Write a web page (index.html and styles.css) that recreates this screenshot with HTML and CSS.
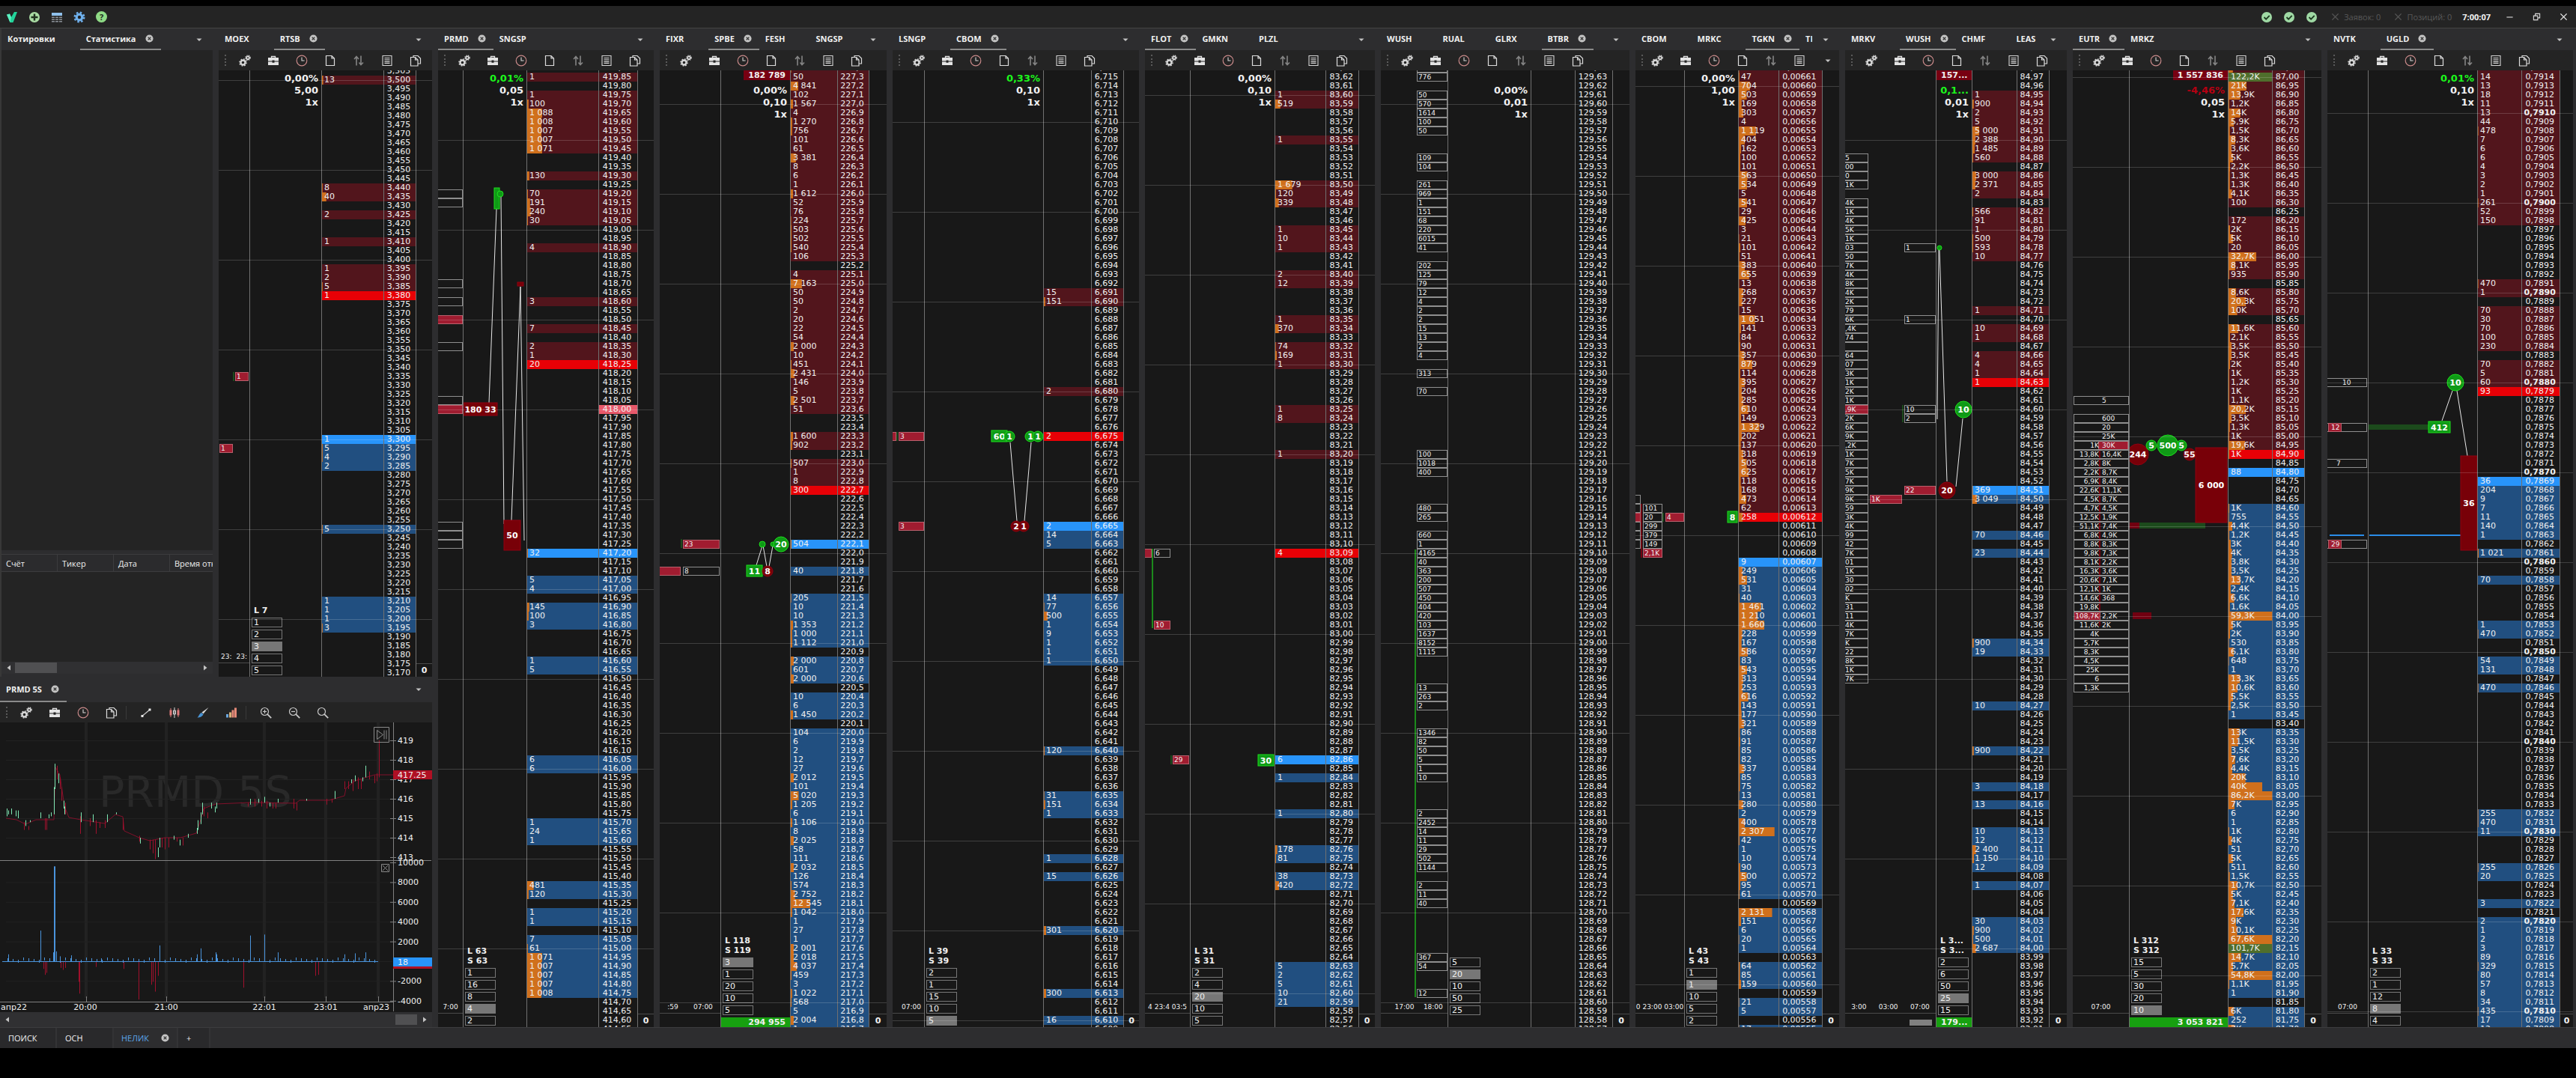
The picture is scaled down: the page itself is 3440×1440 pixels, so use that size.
FILE: index.html
```html
<!DOCTYPE html>
<html lang="ru">
<head>
  <meta charset="UTF-8">
  <title>Терминал</title>
  <meta name="viewport" content="width=device-width, initial-scale=1.0">
  <link rel="stylesheet" href="styles.css">
</head>
<body>

  <!-- Icon set -->
  <svg class="sprite" aria-hidden="true">
    <symbol id="i-gears" viewBox="0 0 16 16">
      <circle cx="5.5" cy="10.5" r="3" fill="none" stroke="#d8d8d8" stroke-width="2.4"/>
      <circle cx="5.5" cy="10.5" r="4.6" fill="none" stroke="#d8d8d8" stroke-width="1.4" stroke-dasharray="1.8 1.8"/>
      <circle cx="12" cy="4.2" r="1.9" fill="none" stroke="#d8d8d8" stroke-width="1.8"/>
      <circle cx="12" cy="4.2" r="3.2" fill="none" stroke="#d8d8d8" stroke-width="1.2" stroke-dasharray="1.4 1.2"/>
    </symbol>
    <symbol id="i-case" viewBox="0 0 16 16">
      <path d="M5.5 4V2.5h5V4" fill="none" stroke="#e4e4e4" stroke-width="1.3"/>
      <path d="M1 4h14v4.5H9.5v-1h-3v1H1zM1 9.5h5.5v1.3h3V9.5H15V14H1z" fill="#e4e4e4"/>
    </symbol>
    <symbol id="i-clock" viewBox="0 0 16 16">
      <circle cx="8" cy="8" r="6.8" fill="none" stroke="#c98a8a" stroke-width="1.2"/>
      <path d="M8 3.5V8h3.6" fill="none" stroke="#d8d8d8" stroke-width="1.1"/>
    </symbol>
    <symbol id="i-doc" viewBox="0 0 16 16">
      <path d="M2.5 1.5h7.5l3.5 3.5v9.5h-11zM10 1.5V5h3.5" fill="none" stroke="#dcdcdc" stroke-width="1.2"/>
    </symbol>
    <symbol id="i-updown" viewBox="0 0 16 16">
      <path d="M5 14.5V3M2 6l3-3.5L8 6M11 1.5V13M8.5 10.5l2.5 3 3-3" fill="none" stroke="#858585" stroke-width="1.6"/>
    </symbol>
    <symbol id="i-list" viewBox="0 0 16 16">
      <path d="M2 1.5h12v13H2zM4.5 4.5h7M4.5 6.8h7M4.5 9.1h7M4.5 11.4h7" fill="none" stroke="#d4d4d4" stroke-width="1.1"/>
    </symbol>
    <symbol id="i-copy" viewBox="0 0 16 16">
      <path d="M5 3.5v-2h6l3.5 3.5v7H11M1.5 3.5h6L11 7v8H1.5zM7.5 3.5V7H11" fill="none" stroke="#dcdcdc" stroke-width="1.2"/>
    </symbol>
    <symbol id="i-close" viewBox="0 0 12 12">
      <circle cx="6" cy="6" r="5.5" fill="#c4c4c4"/>
      <path d="M4 4l4 4M8 4L4 8" stroke="#2b2b2b" stroke-width="1.4"/>
    </symbol>
    <symbol id="i-down" viewBox="0 0 8 8"><path d="M0.5 2.5h7L4 6z" fill="#c4c4c4"/></symbol>
    <symbol id="i-left" viewBox="0 0 8 8"><path d="M6 0.5v7L1.5 4z" fill="#c4c4c4"/></symbol>
    <symbol id="i-right" viewBox="0 0 8 8"><path d="M2 0.5v7L6.5 4z" fill="#c4c4c4"/></symbol>
    <symbol id="i-line" viewBox="0 0 16 16">
      <path d="M3.5 12L13 4" stroke="#c8c8c8" stroke-width="1.2"/>
      <path d="M1.5 11h3v3h-3zM11.5 2.5h3v3h-3z" fill="#e8e8e8"/>
    </symbol>
    <symbol id="i-candles" viewBox="0 0 16 16">
      <path d="M3 2v12M13 2v12" stroke="#e07a7a"/>
      <path d="M1.5 4.5h3v7h-3zM11.5 4.5h3v7h-3z" fill="#e07a7a"/>
      <path d="M8 1v14M6.5 5h3v5h-3z" fill="#242424" stroke="#d8d8d8"/>
    </symbol>
    <symbol id="i-brush" viewBox="0 0 16 16">
      <path d="M15.5 1L6.5 7.5l2 2z" fill="#d8d8d8"/>
      <path d="M6 8l2.5 2.2C7.5 13 4 14.5 0.5 14.5 3 12.5 3 9 6 8z" fill="#4a94d4"/>
    </symbol>
    <symbol id="i-bars" viewBox="0 0 16 16">
      <path d="M1 10h3v4.5H1z" fill="#6aa6dc"/>
      <path d="M5 7.5h3v7H5z" fill="#d8b27a"/>
      <path d="M8.5 4.5h3v10h-3zM12 1.5h3v13h-3z" fill="#e58a78"/>
    </symbol>
    <symbol id="i-zoom" viewBox="0 0 16 16">
      <circle cx="6.5" cy="6.5" r="5" fill="none" stroke="#c8c8c8" stroke-width="1.2"/>
      <path d="M10.2 10.2l5 5" stroke="#c8c8c8" stroke-width="1.8"/>
    </symbol>
    <symbol id="i-zoom-in" viewBox="0 0 16 16">
      <use href="#i-zoom"/><path d="M4 6.5h5M6.5 4v5" stroke="#c8c8c8" stroke-width="1.2"/>
    </symbol>
    <symbol id="i-zoom-out" viewBox="0 0 16 16">
      <use href="#i-zoom"/><path d="M4 6.5h5" stroke="#c8c8c8" stroke-width="1.2"/>
    </symbol>
    <symbol id="i-logo" viewBox="0 0 16 16">
      <path d="M1 4.5l4-1 2 4.5L11 1h4L9.5 15H5.5z" fill="#22d39a"/>
      <path d="M1 4.5l4-1 2 4.5-1.5 7z" fill="#5df0c0"/>
    </symbol>
    <symbol id="i-plus" viewBox="0 0 16 16">
      <circle cx="8" cy="8" r="7" fill="#a9dba4"/><path d="M8 3.5v9M3.5 8h9" stroke="#20301f" stroke-width="2.4"/>
    </symbol>
    <symbol id="i-grid" viewBox="0 0 16 16">
      <path d="M1 2h14v4H1z" fill="#8fc0ec"/>
      <path d="M1 7.5h4V9H1zM6 7.5h4V9H6zM11 7.5h4V9h-4zM1 10.2h4v1.5H1zM6 10.2h4v1.5H6zM11 10.2h4v1.5h-4zM1 13h4v1.5H1zM6 13h4v1.5H6zM11 13h4v1.5h-4z" fill="#8a9097"/>
    </symbol>
    <symbol id="i-gear" viewBox="0 0 16 16">
      <circle cx="8" cy="8" r="3.8" fill="none" stroke="#6fb0ec" stroke-width="3.2"/>
      <circle cx="8" cy="8" r="6.3" fill="none" stroke="#6fb0ec" stroke-width="2.4" stroke-dasharray="2.5 2.45"/>
    </symbol>
    <symbol id="i-ok" viewBox="0 0 16 16">
      <circle cx="8" cy="8" r="7" fill="#9fd9a4"/><path d="M4.5 8l2.6 2.6 4.6-4.8" fill="none" stroke="#1d3a20" stroke-width="1.8"/>
    </symbol>
    <symbol id="i-x" viewBox="0 0 12 12"><path d="M1.5 1.5l9 9M10.5 1.5l-9 9" stroke="currentColor" stroke-width="1.4"/></symbol>
    <symbol id="i-min" viewBox="0 0 12 12"><path d="M1.5 6.5h9" stroke="#ddd" stroke-width="1.2"/></symbol>
    <symbol id="i-restore" viewBox="0 0 12 12">
      <path d="M1.5 4.5h6v6h-6zM4 4.5v-3h6.5v6H7.5" fill="none" stroke="#ddd" stroke-width="1.2"/>
    </symbol>
  </svg>

  <div class="app">
    <header class="titlebar">
      <div class="title-left">
        <button aria-label="Меню"><svg class="icon"><use href="#i-logo"/></svg></button>
        <button aria-label="Добавить"><svg class="icon"><use href="#i-plus"/></svg></button>
        <button aria-label="Вкладки"><svg class="icon"><use href="#i-grid"/></svg></button>
        <button aria-label="Настройки"><svg class="icon"><use href="#i-gear"/></svg></button>
        <button class="help" aria-label="Помощь">?</button>
      </div>
      <div class="title-right">
        <svg class="icon"><use href="#i-ok"/></svg>
        <svg class="icon"><use href="#i-ok"/></svg>
        <svg class="icon"><use href="#i-ok"/></svg>
        <button class="cancel" disabled><svg class="icon-s"><use href="#i-x"/></svg>Заявок: 0</button>
        <button class="cancel" disabled><svg class="icon-s"><use href="#i-x"/></svg>Позиций: 0</button>
        <time>7:00:07</time>
        <button class="win" aria-label="Свернуть"><svg class="icon-s"><use href="#i-min"/></svg></button>
        <button class="win" aria-label="Восстановить"><svg class="icon-s"><use href="#i-restore"/></svg></button>
        <button class="win" aria-label="Закрыть"><svg class="icon-s"><use href="#i-x"/></svg></button>
      </div>
    </header>

    <main class="workspace" id="workspace">
      <div class="left">
        <section class="panel stats">
          <div class="tabs" data-tabs="Котировки,*Статистика"></div>
          <div class="stats-top"></div>
          <div class="stats-table">
            <table>
              <thead>
                <tr><th>Счёт</th><th>Тикер</th><th>Дата</th><th>Время открытия</th></tr>
              </thead>
            </table>
          </div>
          <div class="scrollbar">
            <svg class="icon-xs"><use href="#i-left"/></svg>
            <span class="thumb"></span>
            <svg class="icon-xs"><use href="#i-right"/></svg>
          </div>
        </section>
        <section class="panel" id="rtsb"></section>
        <section class="panel chart">
          <div class="tabs" data-tabs="*PRMD 5S"></div>
          <div class="toolbar" data-icons="gears,case,clock,copy,|,line,candles,brush,bars,|,zoom-in,zoom-out,zoom"></div>
          <svg class="plot" id="plot"></svg>
          <div class="scrollbar">
            <svg class="icon-xs"><use href="#i-left"/></svg>
            <span class="thumb end"></span>
            <svg class="icon-xs"><use href="#i-right"/></svg>
          </div>
        </section>
      </div>
    </main>

    <footer class="pages">
      <button>ПОИСК</button>
      <button>ОСН</button>
      <button class="active">НЕЛИК<svg class="icon-s"><use href="#i-close"/></svg></button>
      <button class="add">+</button>
    </footer>
  </div>

  <script src="script.js"></script>
</body>
</html>
```

FILE: styles.css
```css
* {
  box-sizing: border-box;
}
body {
  margin: 0;
  height: 100vh;
  padding: 8px 0 40px;
  background: #000;
  color: #f0f0f0;
  font-family: Verdana, "DejaVu Sans", sans-serif;
  font-size: 11px;
  overflow: hidden;
}
button {
  margin: 0;
  padding: 0;
  border: none;
  background: none;
  color: inherit;
  font: inherit;
  display: flex;
  align-items: center;
}
.sprite {
  display: none;
}
.icon {
  width: 16px;
  height: 16px;
}
.icon-s {
  width: 11px;
  height: 11px;
}
.icon-xs {
  width: 8px;
  height: 8px;
}
.app {
  height: 100%;
  display: flex;
  flex-direction: column;
  background: #2d2d2f;
}

/* title bar */
.titlebar {
  height: 30px;
  display: flex;
  justify-content: space-between;
  align-items: center;
  padding: 0 6px 0 8px;
  background: #242424;
  border-bottom: 1px solid #444;
  font-family: "Open Sans", sans-serif;
}
.title-left,
.title-right {
  display: flex;
  align-items: center;
  gap: 14px;
}
.help {
  width: 15px;
  height: 15px;
  justify-content: center;
  border-radius: 50%;
  background: #8fdb86;
  color: #1c2c1c;
  font-size: 11px;
  font-weight: bold;
}
.cancel {
  gap: 6px;
  margin-left: 4px;
  color: #585858;
}
.title-right time {
  font-weight: bold;
}
.win {
  width: 22px;
  justify-content: center;
}

/* workspace */
.workspace {
  flex: 1;
  min-height: 0;
  display: grid;
  grid-template-columns: 577fr 288fr 303fr 329fr 307fr 332fr 272fr 296fr 332fr 328fr;
  gap: 8px;
  padding-right: 4px;
}
.left {
  min-width: 0;
  min-height: 0;
  display: grid;
  grid-template-columns: 284fr 285fr;
  grid-template-rows: minmax(0, 1fr) 468px;
  column-gap: 8px;
}
.panel {
  min-width: 0;
  min-height: 0;
  display: flex;
  flex-direction: column;
}
.tabs {
  flex: none;
  height: 29px;
  display: flex;
  font-family: "Open Sans", sans-serif;
  font-weight: bold;
}
.tab-list {
  flex: 1;
  min-width: 0;
  display: flex;
  overflow: hidden;
}
.tab {
  flex: none;
  gap: 12px;
  padding: 0 10px 0 8px;
  border-bottom: 2px solid transparent;
}
.tab .icon-s {
  visibility: hidden;
}
.tab.active {
  border-color: #8a8a8a;
}
.tab.active .icon-s {
  visibility: visible;
}
.more {
  width: 36px;
  justify-content: center;
}
.toolbar {
  flex: none;
  height: 27px;
  display: flex;
  align-items: center;
  padding-left: 8px;
  background: #242424;
  overflow: hidden;
}
.grip {
  width: 8px;
  height: 15px;
  border-left: 2px dotted #5a5a5a;
}
.tool {
  flex: none;
  width: 38px;
  justify-content: center;
}
.tool-sep {
  width: 8px;
  height: 18px;
  border-left: 1px solid #3a3a3a;
}

/* ladder */
.ladder {
  position: relative;
  flex: 1;
  min-height: 0;
  display: grid;
  grid-template-rows: 100%;
  background: #181818;
  overflow: hidden;
}
.ladder::after {
  content: "";
  position: absolute;
  inset: 0;
  background: linear-gradient(rgba(255, 255, 255, 0.17) 1px, transparent 1px) 0 var(--grid) / 100% 120px;
  pointer-events: none;
}
.l-rtsb { grid-template-columns: 41fr 96fr 126fr 22fr; --volume: 66%; }
.l-prmd { grid-template-columns: 33fr 85fr 148fr 22fr; --volume: 65%; }
.l-spbe { grid-template-columns: 81fr 93fr 105fr 24fr; --volume: 60%; }
.l-cbom { grid-template-columns: 42fr 159fr 107fr 21fr; --volume: 60%; }
.l-flot { grid-template-columns: 60fr 113fr 112fr 22fr; --volume: 61%; }
.l-btbr { grid-template-columns: 89fr 111fr 109fr 23fr; --volume: 54%; }
.l-tgkn { grid-template-columns: 65fr 72fr 112fr 23fr; --volume: 48%; }
.l-wush { grid-template-columns: 121fr 48fr 103fr 24fr; --volume: 58%; }
.l-eutr { grid-template-columns: 75fr 132fr 102fr 23fr; --volume: 58%; }
.l-ugld { grid-template-columns: 54fr 146fr 110fr 18fr; --volume: 54%; }

.clusters,
.trades,
.rest {
  position: relative;
  min-width: 0;
  display: flex;
  flex-direction: column;
  overflow: hidden;
}
.trades,
.rest {
  border-left: 1px solid #707070;
}
.clusters svg,
.trades svg {
  position: absolute;
  inset: 0;
  width: 100%;
  height: 100%;
}
.times {
  margin-top: auto;
  display: flex;
  justify-content: space-around;
  height: 14px;
  line-height: 12px;
  font-size: 9px;
  white-space: nowrap;
}
.clusters::after {
  content: "";
  flex: none;
  height: 18px;
  border-top: 1px solid #4a4a4a;
}
.rest b {
  margin-top: auto;
  height: 18px;
  line-height: 18px;
  border-top: 1px solid #4a4a4a;
  text-align: center;
}
.info {
  padding: 3px 4px 0 0;
  text-align: right;
  font-size: 13px;
  font-weight: bold;
  line-height: 16px;
  white-space: nowrap;
}
.info div:first-child.up { color: #1cf71c; }
.info div:first-child.down { color: #b50012; }
.total {
  height: 13px;
  margin-left: auto;
  padding: 0 6px;
  line-height: 13px;
  font-weight: bold;
  text-align: right;
}
.total.top {
  margin-bottom: 3px;
  background: #780012;
}
.total.bottom {
  width: 100%;
  margin: 3px 0 0;
  background: #17a010;
}
.total.none {
  visibility: hidden;
}
.sizes {
  position: relative;
  margin-top: auto;
  padding: 0 2px 2px;
  line-height: 13px;
  font-weight: bold;
}
.sizes p {
  margin: 0 0 0 3px;
}
.size {
  width: 41px;
  height: 13px;
  margin-top: 3px;
  padding-left: 2px;
  border: 1px solid #777;
  font-weight: normal;
}
.size.active {
  background: #777;
}
.has-total .sizes {
  padding-bottom: 0;
}
.box { fill: none; stroke: #8f8f8f; }
.box.hot { fill: #a01c30; stroke: #b8606c; }
.cluster-text { fill: #f0f0f0; font-size: 9px; }
.link { stroke: #e8e8e8; stroke-width: 1; }
.buy { fill: #0f9a16; stroke: #1de01d; }
.buy-line { fill: #1c8a1c; }
.blank { fill: #808080; }
.sell { fill: #780008; stroke: #900010; }
.thin-buy { fill: #1c4a1c; }
.thin-sell { fill: #700010; }
.blue-line { fill: #2b8ce8; }
.mark-text { fill: #fff; font-size: 11px; font-weight: bold; text-anchor: middle; }

.book {
  width: 100%;
  margin-top: -9px;
  align-self: start;
  table-layout: fixed;
  border-spacing: 0;
  line-height: 12px;
}
.l-rtsb .book {
  margin-top: -5px;
}
.book td {
  height: 12px;
  padding: 0 0 0 3px;
  border-left: 1px solid #707070;
  white-space: nowrap;
}
.book td:first-child {
  width: var(--volume);
  background: linear-gradient(#d0701c, #d0701c) 0 0 / var(--fill, 0) 100% no-repeat;
}
.book td:last-child {
  padding: 0 3px 0 0;
  text-align: center;
}
.book td.ask { background-color: #52151c; }
.book td.bid { background-color: #214f80; }
.book td.best.ask { background-color: #e80006; }
.book td.best.bid { background-color: #2894fa; }
.book .huge td:first-child { background: #4f6e2c; }
.book .pin td:last-child { background: #e8596a; }
.book .round td:last-child { font-weight: bold; }

/* statistics */
.stats {
  border-left: 2px solid #383838;
}
.stats-top {
  flex: 1;
  background: #242424;
}
.stats-table {
  height: 144px;
  margin-top: 5px;
  background: #242424;
  overflow: hidden;
}
.stats table {
  width: 345px;
  table-layout: fixed;
  border-spacing: 0;
}
.stats th {
  width: 75px;
  height: 24px;
  padding: 0 6px;
  border: solid #3c3c3e;
  border-width: 1px 1px 1px 0;
  background: #2b2b2d;
  font-family: "Open Sans", sans-serif;
  font-weight: normal;
  text-align: left;
}
.stats th:last-child {
  width: 120px;
}
.scrollbar {
  flex: none;
  height: 16px;
  display: flex;
  align-items: center;
  padding: 0 6px;
  background: #303032;
}
.stats .scrollbar {
  margin-bottom: 4px;
}
.scrollbar .icon-xs:last-child {
  margin-left: auto;
}
.thumb {
  width: 56px;
  height: 14px;
  margin-left: 4px;
  background: #505052;
}
.thumb.end {
  width: 29px;
  margin: 0 0 0 auto;
}
.thumb.end + .icon-xs:last-child {
  margin-left: 6px;
}

/* chart */
.chart {
  grid-column: 1 / 3;
}
.chart .tabs {
  height: 34px;
}
.plot {
  flex: 1;
  min-height: 0;
  width: 100%;
  background: #181818;
}
.chart .scrollbar {
  height: 20px;
}
.plot text { fill: #f0f0f0; font-size: 11px; }
.plot .watermark { fill: #292929; font-size: 57px; }
.plot .rule { fill: #222; }
.plot .axis { fill: #808080; }
.plot .up { fill: #7fe8b4; }
.plot .down { fill: #a0102c; }
.plot .path { fill: none; stroke: #80102a; }
.plot .vol { fill: #4a94dc; }
.plot .tag-down { fill: #b01024; }
.plot .tag-vol { fill: #2894fa; }
.plot .tool-box { fill: none; stroke: #8a8a8a; }

/* page tabs */
.pages {
  flex: none;
  height: 28px;
  display: flex;
  border-top: 1px solid #3c3c3e;
  font-family: "Open Sans", sans-serif;
  font-size: 11px;
}
.pages button {
  gap: 16px;
  padding: 0 24px 0 11px;
  min-width: 76px;
  background: #29292b;
  border-right: 2px solid #333335;
}
.pages .active {
  padding: 0 10px;
  color: #5aa5ea;
  background: #2d2d2f;
}
.pages .add {
  min-width: 30px;
}
```

FILE: script.js
```js
// ~n skips n price levels, | separates asks from bids
const ladders = [
  {
    id: "rtsb", tabs: "MOEX,*RTSB", start: 3505, step: 5, dec: 3, rows: 68, grid: 13, top: -5, max: 560,
    book: "~1 13 ~11 8 40 ~1 2 ~2 1 ~2 1 2 5 1 | ~15 1 5 4 2 ~6 5 ~7 1 1 1 3",
    info: ["0,00%", "5,00", "1x"], sums: ["L 7"], sizes: [1, 2, 3, 4, 5], active: 2, times: ["23:", "23:"],
    clusters: [{ x: 22, w: 17, cells: "~34 1!" }, { x: 1, w: 17, cells: "~42 1!" }],
    bars: [["thin-buy", 19, 403, 2, 12]],
    marks: []
  },
  {
    id: "prmd", tabs: "*PRMD,SNGSP", start: 41990, step: 5, dec: 2, grid: 93, max: 5100, pin: 41800,
    book: "~1 1 ~1 1 100 1088 1008 1007 1007 1071 ~2 130 ~1 70 191 240 30 ~2 4 ~5 3 ~2 7 ~1 2 1 20 | ~20 32 ~2 5 4 ~1 145 100 3 ~3 1 5 ~9 6 6 ~5 1 24 1 ~4 481 120 ~1 1 1 ~1 7 61 1071 1007 1007 1007 1008",
    info: ["0,01%", "0,05", "1x"], sums: ["L 63", "S 63"], sizes: [1, 16, 8, 4, 2], active: 3, times: ["7:00"],
    clusters: [{ x: -6, w: 38, cells: "~14 _ _ ~8 _ ~1 _ ~1 _! ~2 _ ~5 _ _! ~12 _ _ _" }],
    bars: [],
    marks: [
      ["link", 44, 185, 34, 444], ["link", 50, 168, 54, 606], ["link", 76, 289, 64, 601], ["link", 76, 289, 81, 628],
      ["buy", 41, 157, 7, 28], ["buy", 49, 165, 4], ["sell", 72, 283, 8, 5],
      ["sell", 0, 444, 45, 17, "180 33"], ["sell", 54, 601, 22, 40, "50"]
    ]
  },
  {
    id: "spbe", tabs: "FIXR,*SPBE,FESH,SNGSP", start: 2274, step: 1, dec: 1, grid: 45, max: 30000,
    book: "302 50 4841 102 1567 4 1270 756 101 61 3381 8 6 1 1612 52 76 224 503 502 540 106 ~1 4 7163 50 50 2 20 22 54 2000 10 451 2431 146 5 2501 51 ~2 1600 902 ~1 507 1 8 300 | ~5 504 ~2 40 ~2 205 10 10 1353 1000 1112 ~1 2000 601 2000 ~1 10 6 1450 ~1 104 6 2 12 27 2012 101 5020 1205 6 1106 8 2025 58 111 2032 126 574 2752 12545 1042 1 27 1 2001 2018 4037 459 3 1022 568 5 2004 1",
    top_total: "182 789", bottom_total: "294 955",
    info: ["0,00%", "0,10", "1x"], sums: ["L 118", "S 119"], sizes: [3, 1, 20, 10, 5], active: 0, times: [":59", "07:00"],
    clusters: [{ x: 31, w: 48, cells: "~53 23! ~2 8" }, { x: -4, w: 31, cells: "~56 _!" }],
    bars: [["thin-buy", 28, 626, 2, 12]],
    marks: [
      ["link", 47, 661, 55, 635], ["link", 56, 635, 61, 663], ["link", 64, 663, 69, 635],
      ["buy", 55, 633, 4], ["buy", 69, 633, 3], ["buy", 80, 633, 10, "20"],
      ["buy", 34, 661, 21, 15, "11"], ["sell", 62, 669, 7, "8"]
    ]
  },
  {
    id: "cbom", tabs: "LSNGP,*CBOM", start: 6716, step: 1, dec: 3, grid: 69, max: 6000,
    book: "~25 15 151 ~9 2 ~4 2 | ~9 2 14 5 ~5 14 77 500 1 9 1 1 1 ~9 120 ~4 31 151 1 ~4 1 ~1 15 ~5 301 ~6 300 ~2 16",
    info: ["0,33%", "0,10", "1x"], sums: ["L 39", "S 39"], sizes: [2, 1, 15, 10, 5], active: 4, times: ["", "07:00"],
    clusters: [{ x: 8, w: 33, cells: "~41 3! ~9 3!" }, { x: -4, w: 8, cells: "~41 _!" }],
    bars: [["thin-buy", 5, 483, 2, 12]],
    marks: [
      ["link", 114, 497, 123, 602], ["link", 142, 497, 133, 602],
      ["buy", 89, 481, 21, 15, "60"], ["buy", 113, 489, 7, "1"], ["buy", 141, 489, 7, "1"], ["buy", 151, 489, 7, "1"],
      ["sell", 122, 609, 7, "2"], ["sell", 132, 609, 7, "1"]
    ]
  },
  {
    id: "flot", tabs: "*FLOT,GMKN,PLZL", start: 8363, step: 1, dec: 2, grid: 33, max: 5000,
    book: "~3 1 519 ~3 1 ~4 1679 120 339 ~2 1 10 1 ~2 2 12 ~3 1 370 ~1 74 169 1 ~4 1 8 ~3 1 ~10 4 | ~22 6 ~1 1 ~3 1 ~3 178 81 ~1 38 420 ~8 5 2 5 10 21",
    info: ["0,00%", "0,10", "1x"], sums: ["L 31", "S 31"], sizes: [2, 4, 20, 10, 5], active: 2, times: ["4 23:4 03:5"],
    clusters: [{ x: 12, w: 21, cells: "~54 6 ~7 10!" }, { x: 37, w: 21, cells: "~77 29!" }, { x: -4, w: 12, cells: "~54 _!" }],
    bars: [["buy-line", 9, 639, 2, 106], ["thin-buy", 34, 915, 2, 12]],
    marks: [["buy", 90, 914, 21, 15, "30"]]
  },
  {
    id: "btbr", tabs: "WUSH,RUAL,GLRX,*BTBR", start: 12964, step: 1, dec: 2, grid: 45, max: 5000,
    book: "",
    top_total: "", bottom_total: "",
    info: ["0,00%", "0,01", "1x"], sums: [], sizes: [5, 20, 10, 50, 25], active: 1, times: ["", "17:00", "18:00"],
    clusters: [{ x: 48, w: 40, cells: "25 776 ~1 50 570 1614 100 50 ~2 109 104 ~1 261 969 1 151 68 220 6015 41 ~1 202 125 79 12 4 2 2 15 13 2 4 ~1 313 ~1 70 ~6 100 1018 400 ~3 480 265 ~1 660 1 4165 40 363 200 507 450 404 420 103 1637 8152 1115 ~3 13 263 2 ~2 1346 82 50 5 1 10 ~3 2 2452 14 11 29 502 1144 ~1 2 11 40 ~5 367 54 ~2 12" }],
    bars: [["buy-line", 45, 640, 2, 598]],
    marks: []
  },
  {
    id: "tgkn", tabs: "CBOM,MRKC,*TGKN,TRMK", start: 662, step: 1, dec: 5, grid: 21, max: 2550, short: true,
    book: "26 47 704 503 169 303 4 1119 404 162 100 101 563 534 5 541 29 425 3 21 101 51 383 655 13 268 227 15 1051 141 84 90 357 879 114 395 204 285 610 149 1329 202 137 318 505 625 118 168 473 62 258 | ~4 9 249 531 31 40 1461 1210 1660 228 167 586 83 543 313 253 616 143 177 321 86 91 85 82 337 85 75 13 280 2 400 2307 42 1 10 90 500 95 61 ~1 2131 151 6 20 1 ~1 64 85 159 ~1 21 5 ~1 17",
    info: ["0,00%", "1,00", "1x"], sums: ["L 43", "S 43"], sizes: [1, 1, 10, 5, 2], active: 1, times: ["0 23:00 03:00"],
    clusters: [{ x: 10, w: 25, cells: "~49 101 20 299 379 149 2,1K!" }, { x: -4, w: 10, cells: "~48 _ _ _! _ _ _" }, { x: 40, w: 24, cells: "~50 4!" }],
    bars: [["thin-sell", 7, 579, 2, 72], ["thin-buy", 36, 591, 2, 12]],
    marks: [["buy", 57, 589, 13, 15, "8"]]
  },
  {
    id: "wush", tabs: "MRKV,*WUSH,CHMF,LEAS", start: 8498, step: 1, dec: 2, grid: 93, max: 32000,
    book: "~3 1 900 2 5 5000 2388 1485 560 ~1 3000 2371 2 ~1 566 91 1 500 593 10 ~5 1 ~1 10 1 ~1 4 4 1 1 | ~11 369 3049 ~3 70 ~1 23 ~9 900 19 ~5 10 ~4 900 ~3 3 ~1 13 ~2 10 12 2400 1150 12 ~1 1 ~3 30 900 500 2687",
    top_total: "157...", bottom_total: "179...",
    info: ["0,1...", "0,01", "1x"], sums: ["L 3...", "S 3..."], sizes: [2, 6, 50, 25, 15], active: 3, times: ["3:00", "03:00", "07:00"],
    clusters: [
      { x: -2, w: 32, cells: "~10 5 00 0 1K ~1 4K 1K 4K 5K 1K 03 50 7K 4K 8K 4K 2K 79 6K ,4K 74 _ 64 07 3K 1K 2K 1K ,9K! 2K 6K 9K ,2K 1K 7K 5K 7K 9K 9K 59 3K 4K 99 42 7K 01 1K 30 02 K 31 11 4K 7K K 22 8K 1K 7K" },
      { x: 79, w: 41, cells: "~20 1 ~7 1 ~9 10 2 ~7 22!" },
      { x: 33, w: 42, cells: "~48 1K!" }
    ],
    bars: [["thin-buy", 76, 447, 2, 23], ["blank", 86, 1268, 30, 8]],
    marks: [
      ["link", 4, 239, 14, 549], ["link", 3, 239, 1, 466], ["link", 35, 465, 26, 556],
      ["buy", 4, 237, 3], ["buy", 36, 453, 11, "10"], ["sell", 14, 561, 11, "20"]
    ]
  },
  {
    id: "eutr", tabs: "*EUTR,MRKZ", start: 8705, step: 5, dec: 2, grid: 9, max: 51000,
    book: "5K 122.2K 21K 13.9K 1.2K 14K 5.9K 1.5K 8.3K 3.6K 5K 2.2K 1.3K 1.3K 4.1K 100 ~1 172 2K 5K 20 32.7K 8.1K 935 ~1 8.6K 20.3K 10K ~1 11.6K 2.1K 3.5K 3.5K 2K 1K 1.2K 1K 1.1K 20.2K 3.5K 1.3K 1K 19.6K 1K | ~1 88 ~3 1K 755 4.4K 1.2K 3K 4K 3.8K 3.5K 13.7K 2.4K 6.6K 1.6K 59.3K 5K 2K 530 6.1K 648 1 13.3K 10.6K 5.5K 2.5K 1 ~1 13K 11.5K 3.5K 7.6K 4.4K 20K 40K 86.2K 7K 6 1 1K 4K 51 5K 511 1.5K 10.7K 5K 7.1K 17.6K 9K 10.1K 67.6K 101.7K 14.7K 5.7K 54.8K 1.1K 1 ~1 6K 252 7K",
    top_total: "1 557 836", bottom_total: "3 053 821",
    info: ["-4,46%", "0,05", "1x"], sums: ["L 312", "S 312"], sizes: [15, 5, 30, 20, 10], active: 4, times: ["07:00"],
    clusters: [
      { x: 34, w: 39, cells: "~42 _!" }, { x: 1, w: 35, cells: "~61 _!" },
      { x: 1, w: 73, cells: "~37 /5 ~1 /600 /20 /25K 1K/30K 13,8K/16,4K 2,8K/8K 2,2K/8,7K 6,9K/8,4K 22,6K/11,1K 4,5K/8,7K 4,7K/4,5K 12,5K/1,9K 51,1K/7,4K 6,8K/4,9K 8,8K/8,3K 9,8K/7,3K 8,1K/2,2K 16,3K/3,6K 20,6K/7,1K 12,1K/1K 14,6K/368 19,8K/ 108,7K/2,2K 11,6K/2K 4K/ 5,7K/ 8,3K/ 4,5K/ 25K/ 6/ 1,3K/" }
    ],
    bars: [["thin-sell", 35, 502, 2, 240]],
    marks: [
      ["thin-buy", 13, 604, 88, 8], ["thin-sell", 0, 604, 13, 8], ["thin-sell", 4, 724, 25, 9],
      ["sell", 11, 513, 14, "244"], ["sell", 80, 513, 8, "55"], ["sell", 88, 504, 42, 100, "6 000"],
      ["buy", 69, 501, 7, "5"], ["buy", 51, 501, 14, "500"], ["buy", 29, 501, 7, "5"]
    ]
  },
  {
    id: "ugld", tabs: "NVTK,*UGLD", start: 7915, step: 1, dec: 4, grid: 57, max: 50000, bold: true,
    book: "38 14 13 18 11 13 44 478 7 6 6 4 3 2 1 261 52 150 ~6 470 1 ~1 70 30 70 100 230 ~1 70 5 60 93 | ~9 36 204 9 7 11 140 1 ~1 1021 ~2 70 ~4 1 470 ~2 54 131 ~1 470 ~13 255 470 11 ~3 255 20 ~2 3 ~1 2 1 2 3 89 329 80 57 8 34 435 17 12",
    info: ["0,01%", "0,10", "1x"], sums: ["L 33", "S 33"], sizes: [2, 1, 12, 8, 4], active: 3, times: ["07:00"],
    clusters: [
      { x: -4, w: 56, t: 24, cells: "~35 10" }, { x: -4, w: 56, t: 16, cells: "~44 7" },
      { x: -4, w: 56, cells: "~40 _ ~12 _" }, { x: 1, w: 17, t: 4, cells: "~40 12! ~12 29!" }
    ],
    bars: [["blue-line", 3, 620, 46, 2]],
    marks: [
      ["blue-line", 1, 620, 122, 2], ["thin-buy", 0, 473, 80, 7],
      ["link", 112, 428, 98, 468], ["link", 118, 428, 132, 515],
      ["buy", 80, 469, 29, 15, "412"], ["buy", 116, 417, 11, "10"], ["sell", 123, 515, 22, 126, "36"]
    ]
  }
];

const expand = str => {
  const out = [];
  str.split(" ").filter(Boolean).forEach(token => {
    if (token[0] === "~") {
      for (let i = 0; i < Number(token.slice(1)); i++) out.push("");
    } else {
      out.push(token);
    }
  });
  return out;
};

const icon = (name, size) => `<svg class="${size}"><use href="#i-${name}"/></svg>`;

const tabsHtml = list => {
  const tabs = list.split(",").map(name => {
    const active = name[0] === "*";
    return `<button class="tab${active ? " active" : ""}">${name.replace("*", "")}${icon("close", "icon-s")}</button>`;
  });
  return `<div class="tab-list">${tabs.join("")}</div><button class="more" aria-label="Ещё">${icon("down", "icon-xs")}</button>`;
};

const toolbarHtml = list => `<span class="grip"></span>` + list.split(",").map(name => {
  if (name === "|") return `<span class="tool-sep"></span>`;
  return `<button class="tool" aria-label="${name}">${icon(name, name === "down" ? "icon-xs" : "icon")}</button>`;
}).join("");

const bookHtml = l => {
  const [askPart, bidPart = ""] = l.book.split("|");
  const asks = expand(askPart);
  const bids = expand(bidPart);
  const levels = asks.concat(bids);
  const bestBid = asks.length + bids.findIndex(v => v);
  let html = "";
  for (let i = 0; i < (l.rows || 108); i++) {
    const raw = levels[i] || "";
    const units = l.start - i * l.step;
    const value = parseFloat(raw) * (raw.endsWith("K") ? 1000 : 1);
    const fill = Math.min(100, Math.round(value / l.max * 100));
    let side = "";
    if (raw) side = i < asks.length ? "ask" : "bid";
    if (raw && (i === asks.length - 1 || i === bestBid)) side += " best";
    const row = [
      value > 100000 ? "huge" : "",
      units === l.pin ? "pin" : "",
      l.bold && units % 10 === 0 ? "round" : ""
    ].join(" ").trim();
    const text = raw.replace(".", ",").replace(/^(\d+)(\d{3})$/, "$1\u00a0$2");
    const price = (units / 10 ** l.dec).toFixed(l.dec).replace(".", ",");
    const style = fill > 0 ? ` style="--fill: ${fill}%"` : "";
    html += `<tr class="${row}"><td class="${side}"${style}>${text}</td><td class="${side}">${price}</td></tr>`;
  }
  return `<table class="book"><tbody>${html}</tbody></table>`;
};

const clustersSvg = l => {
  let out = l.bars.map(([cls, x, y, w, h]) => rect(cls, x, y, w, h)).join("");
  l.clusters.forEach(c => {
    expand(c.cells).forEach((cell, i) => {
      if (!cell) return;
      const y = (l.top || -9) + i * 12;
      const hot = cell.endsWith("!");
      const text = cell.replace(/[!_]/g, "");
      out += rect(hot ? "box hot" : "box", c.x + 0.5, y + 0.5, c.w, 11);
      if (text.includes("/")) {
        const [a, b] = text.split("/");
        out += `<text class="cluster-text" x="35" y="${y + 9}" text-anchor="end">${a}</text>`;
        out += `<text class="cluster-text" x="39" y="${y + 9}">${b}</text>`;
      } else if (text) {
        out += `<text class="cluster-text" x="${c.x + (c.t || 2)}" y="${y + 9}">${text}</text>`;
      }
    });
  });
  return `<svg>${out}</svg>`;
};

// circles are [cls, cx, cy, r, text], boxes are [cls, x, y, w, h, text]
const marksSvg = l => {
  const out = l.marks.map(m => {
    const [cls, x, y, a, b, label] = m;
    if (cls === "link") return `<line class="link" x1="${x}" y1="${y}" x2="${a}" y2="${b}"/>`;
    if (typeof b === "number") {
      const text = label ? `<text class="mark-text" x="${x + a / 2}" y="${y + b / 2 + 4}">${label}</text>` : "";
      return rect(cls, x, y, a, b) + text;
    }
    const text = b ? `<text class="mark-text" x="${x}" y="${y + 4}">${b}</text>` : "";
    return `<circle class="${cls}" cx="${x}" cy="${y}" r="${a}"/>${text}`;
  }).join("");
  return `<svg>${out}</svg>`;
};

const totalHtml = (text, pos) =>
  text === undefined ? "" : `<div class="total ${pos}${text ? "" : " none"}">${text || "0"}</div>`;

const ladderHtml = l => {
  let tone = "";
  if (l.info[0][0] === "-") tone = "down";
  else if (l.info[0] !== "0,00%") tone = "up";
  const info = l.info.map((t, i) => `<div class="${i ? "" : tone}">${t}</div>`).join("");
  const sizes = l.sizes.map((s, i) => `<button class="size${i === l.active ? " active" : ""}">${s}</button>`).join("");
  const tools = "gears,case,clock,doc,updown,list," + (l.short ? "down" : "copy");
  return `
    <div class="tabs">${tabsHtml(l.tabs)}</div>
    <div class="toolbar">${toolbarHtml(tools)}</div>
    <div class="ladder l-${l.id}" style="--grid: ${l.grid}px">
      <div class="clusters">${clustersSvg(l)}<div class="times">${l.times.map(t => `<span>${t}</span>`).join("")}</div></div>
      <div class="trades${l.bottom_total === undefined ? "" : " has-total"}">
        ${marksSvg(l)}
        ${totalHtml(l.top_total, "top")}
        <div class="info">${info}</div>
        <div class="sizes">${l.sums.map(s => `<p>${s}</p>`).join("")}${sizes}</div>
        ${totalHtml(l.bottom_total, "bottom")}
      </div>
      ${bookHtml(l)}
      <div class="rest"><b>0</b></div>
    </div>`;
};

const rect = (cls, x, y, w, h) => `<rect class="${cls}" x="${x}" y="${y}" width="${w}" height="${h}"/>`;
const label = (x, y, text, anchor) => `<text x="${x}" y="${y}" text-anchor="${anchor || "start"}">${text}</text>`;

document.querySelectorAll("[data-tabs]").forEach(el => el.innerHTML = tabsHtml(el.dataset.tabs));
document.querySelectorAll("[data-icons]").forEach(el => el.innerHTML = toolbarHtml(el.dataset.icons));

const workspace = document.getElementById("workspace");
ladders.forEach(l => {
  if (l.id === "rtsb") {
    document.getElementById("rtsb").innerHTML = ladderHtml(l);
    return;
  }
  const section = document.createElement("section");
  section.className = "panel";
  section.innerHTML = ladderHtml(l);
  workspace.appendChild(section);
});

// 5 second chart: [x, high, low]
const upCandles = [
  [9, 415.5, 415.1], [11, 415.4, 415.2], [15, 415.5, 415.2], [21, 415.4, 415.1], [24, 415.4, 415], [34, 414.9, 414.6],
  [40, 414.9, 414.8], [54, 415.3, 415], [65, 415.2, 415], [68, 415.3, 415.1], [72, 416.6, 415.2], [73, 417.8, 416.5], [78, 417.3, 416.8],
  [85, 415.9, 415.5], [86, 415.6, 415.2], [108, 415.3, 414.8], [124, 415.2, 414.8], [143, 415.2, 414.8], [155, 415.3, 415.2],
  [187, 414, 413.7], [211, 413.5, 413], [213, 414, 413.5], [232, 414.1, 413.9], [240, 413.9, 413.6], [251, 414.2, 414],
  [263, 414.5, 414.2], [264, 414.9, 414.4], [268, 415.3, 414.7], [270, 415.8, 415.2], [282, 415.8, 415.5], [287, 415.6, 415.3],
  [289, 415.8, 415.5], [334, 416, 415.7], [345, 416, 415.8], [353, 416.1, 415.8], [360, 415.8, 415.6], [371, 416, 415.8],
  [409, 416, 415.9], [447, 416.4, 416], [469, 417, 416.8], [474, 417.2, 416.9], [484, 417.1, 416.9], [488, 417.7, 417.1]
];
const downCandles = [
  [32, 414.8, 414.4], [38, 414.6, 414.4], [60, 415, 414.4], [62, 415, 414.4], [76, 417.7, 417], [80, 417.1, 416.5], [82, 416.6, 415.9],
  [87, 415.8, 415.2], [107, 415.1, 414.2], [120, 415, 414.6], [128, 414.9, 414.2], [133, 414.8, 414.5], [140, 414.9, 414.5],
  [164, 415, 414.4], [186, 414.1, 413.8], [200, 413.9, 413.4], [204, 413.9, 413.2], [207, 413.9, 412.9], [216, 414, 413.5],
  [220, 414, 413.4], [225, 414, 413.5], [236, 414, 413.8], [244, 414, 413.6], [272, 415.6, 415.1], [277, 415.3, 415], [331, 415.8, 415.6],
  [340, 416, 415.6], [349, 415.9, 415.6], [356, 415.9, 415.5], [364, 415.8, 415.5], [368, 415.8, 415.5], [392, 416, 415.5], [396, 415.8, 415.4],
  [436, 416, 415.7], [443, 416, 415.8], [460, 416.9, 416.5], [465, 416.9, 416.5], [471, 417, 416.4], [478, 417.1, 416.5], [482, 417, 416.5],
  [493, 417.4, 417], [500, 417.2, 416.8], [503, 417.3, 416.9], [506, 419, 417.1]
];
const path = "8,128 22,130 34,136 48,130 72,130 74,60 80,70 86,112 92,127 108,130 140,135 154,123 164,126 166,145 186,154 200,158 220,154 241,154 262,148 268,130 272,115 288,109 335,107 395,108 400,104 440,104 460,98 462,88 474,78 500,70 525,70";
const volumes = [
  [11, 700], [54, 3100], [71, 900], [72, 9600], [73, 9600], [75, 1000], [80, 500], [95, 600], [135, 300], [213, 1600], [263, 700], [268, 1300],
  [288, 900], [289, 700], [334, 2600], [353, 2700], [371, 900], [460, 700], [474, 800], [488, 900],
  [58, -700], [60, -1300], [62, -1100], [81, -600], [84, -800], [87, -600], [105, -2000], [106, -3200], [128, -500], [165, -700],
  [185, -3800], [202, -2300], [204, -2000], [207, -3000], [211, -1400], [325, -2600], [421, -1400], [425, -1300]
];

const drawPlot = () => {
  const priceY = p => 24 + (419 - p) * 26;
  let svg = `<text class="watermark" x="132" y="113">PRMD 5S</text>`;
  [115, 222, 353, 435, 505].forEach(x => svg += rect("rule", x - 2, 0, 4, 368) + rect("axis", x, 366, 1, 7));
  for (let p = 414; p <= 419; p++) svg += rect("rule", 8, priceY(p), 516, 1);
  for (let v = -2000; v <= 8000; v += 2000) svg += rect("rule", 8, 319 - v * 0.0132, 516, 1);
  svg += `<polyline class="path" points="${path}"/>`;
  upCandles.forEach(([x, hi, lo]) => svg += rect("up", x, priceY(hi), 1, priceY(lo) - priceY(hi)));
  downCandles.forEach(([x, hi, lo]) => svg += rect("down", x, priceY(hi), 1, priceY(lo) - priceY(hi)));
  volumes.forEach(([x, v]) => {
    const h = Math.abs(v) * 0.0132;
    svg += rect(v > 0 ? "vol" : "down", x, v > 0 ? 319 - h : 320, 1, h);
  });
  for (let x = 10; x < 505; x += 7) svg += rect("vol", x, 317 - (x * 13 % 4), 1, 4);
  svg += rect("vol", 3, 319, 502, 1);
  svg += rect("axis", 0, 184, 576, 1) + rect("axis", 0, 373, 525, 1) + rect("axis", 525, 0, 1, 386);
  for (let p = 413; p <= 419; p++) svg += rect("axis", 521, priceY(p), 8, 1) + label(531, priceY(p) + 4, p);
  [10000, 8000, 6000, 4000, 2000, -2000, -4000].forEach(v => {
    const y = 319 - v * 0.0132;
    svg += rect("axis", 521, y, 8, 1) + label(531, y + 4, v);
  });
  svg += rect("tag-down", 525, 64, 52, 12) + label(531, 74, "417.25");
  svg += rect("tag-down", 525, 326, 52, 3) + rect("tag-vol", 525, 314, 52, 12) + label(531, 324, "18");
  svg += `<path class="tool-box" d="M499.5 6.5h20v20h-20zM503.5 10.5v12l8-6zM513 10.5v12M516 10.5v12"/>`;
  svg += `<path class="tool-box" d="M509.5 189.5h10v10h-10zM511 191l7 7M518 191l-7 7"/>`;
  svg += label(1, 384, "апр22") + label(114, 384, "20:00", "middle") + label(222, 384, "21:00", "middle");
  svg += label(353, 384, "22:01", "middle") + label(435, 384, "23:01", "middle") + label(520, 384, "апр23", "end");
  document.getElementById("plot").innerHTML = svg;
};
drawPlot();
```
